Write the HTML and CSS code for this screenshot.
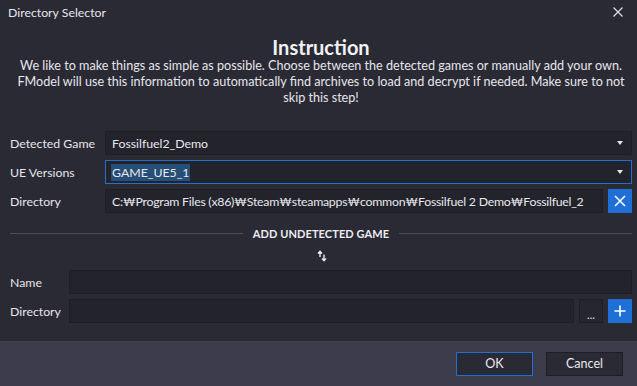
FILE: index.html
```html
<!DOCTYPE html>
<html>
<head>
<meta charset="utf-8">
<link rel="stylesheet" href="styles.css">
</head>
<body>
<div class="window">
  <div class="titlebar">
    <span class="title">Directory Selector</span>
    <svg class="close" width="10" height="10" viewBox="0 0 10 10"><path d="M0.5 0.5 L9.5 9.5 M9.5 0.5 L0.5 9.5" stroke="#e6e6e6" stroke-width="1.1" fill="none"/></svg>
  </div>
  <div class="content">
    <h1 class="heading">Instruction</h1>
    <p class="intro">We like to make things as simple as possible. Choose between the detected games or manually add your own. FModel will use this information to automatically find archives to load and decrypt if needed. Make sure to not skip this step!</p>

    <div class="form">
      <div class="row">
        <label class="label wide">Detected Game</label>
        <div class="field select"><span>Fossilfuel2_Demo</span><span class="arrow"></span></div>
      </div>
      <div class="row">
        <label class="label wide">UE Versions</label>
        <div class="field select focused"><span class="sel">GAME_UE5_1</span><span class="arrow"></span></div>
      </div>
      <div class="row">
        <label class="label wide">Directory</label>
        <div class="field grow"><span class="path">C:₩Program Files (x86)₩Steam₩steamapps₩common₩Fossilfuel 2 Demo₩Fossilfuel_2</span></div>
        <button class="btn-icon blue"><svg width="12" height="12" viewBox="0 0 12 12"><path d="M1 1 L11 11 M11 1 L1 11" stroke="#fff" stroke-width="1.6" fill="none"/></svg></button>
      </div>
    </div>

    <div class="divider"><span class="line"></span><span class="dtext">ADD UNDETECTED GAME</span><span class="line"></span></div>

    <div class="swap">
      <svg width="10" height="12" viewBox="0 0 10 12"><path d="M3 1.5 L3 7 M1 3.5 L3 1.2 L5 3.5" stroke="#e8e8e8" stroke-width="1.4" fill="none"/><path d="M7 4.5 L7 10.5 M5 8.5 L7 10.8 L9 8.5" stroke="#e8e8e8" stroke-width="1.4" fill="none"/></svg>
    </div>

    <div class="form">
      <div class="row">
        <label class="label narrow">Name</label>
        <div class="field grow"></div>
      </div>
      <div class="row">
        <label class="label narrow">Directory</label>
        <div class="field grow"></div>
        <button class="btn-icon dark"><span class="dots">...</span></button>
        <button class="btn-icon blue"><svg width="12" height="12" viewBox="0 0 12 12"><path d="M6 0.5 L6 11.5 M0.5 6 L11.5 6" stroke="#fff" stroke-width="1.6" fill="none"/></svg></button>
      </div>
    </div>
  </div>
  <div class="footer">
    <button class="btn ok">OK</button>
    <button class="btn">Cancel</button>
  </div>
</div>
</body>
</html>
```

FILE: styles.css
```css
* { box-sizing: border-box; }
html, body {
  margin: 0;
  padding: 0;
  background: #2a2a35;
}
body {
  width: 637px;
  height: 386px;
  overflow: hidden;
  font-family: Lato, "Noto Sans", "Noto Sans CJK KR", sans-serif;
  font-size: 12.3px;
  color: #e8e8ec;
}
.window {
  display: flex;
  flex-direction: column;
  height: 386px;
}
.titlebar {
  height: 26px;
  display: flex;
  align-items: center;
  justify-content: space-between;
  padding: 0 14px 2px 8px;
}
.title {
  font-size: 12.3px;
  color: #e6e6ea;
}
.content {
  flex: 1;
  padding: 0 5px 0 10px;
}
.heading {
  margin: 10px 0 0;
  font-size: 20px;
  font-weight: 700;
  line-height: 22px;
  text-align: center;
  color: #f2f2f4;
}
.intro {
  margin: 0;
  padding: 0 2px;
  text-align: center;
  line-height: 16px;
  font-size: 12.6px;
  color: #e6e6ea;
}
.form {
  display: flex;
  flex-direction: column;
  gap: 5px;
}
.content > .form:first-of-type { margin-top: 25px; }
.row {
  display: flex;
  align-items: center;
  gap: 5px;
  height: 24px;
}
.label {
  flex: none;
  white-space: nowrap;
  color: #e6e6ea;
}
.label.wide { width: 90px; }
.label.narrow { width: 54px; }
.field {
  flex: 1;
  height: 24px;
  background: #23232c;
  border: 1px solid #1e1e26;
  display: flex;
  align-items: center;
  padding: 0 6px;
  min-width: 0;
  white-space: nowrap;
  overflow: hidden;
}
.path { letter-spacing: -0.25px; }
.select { justify-content: space-between; padding-right: 8px; }
.focused { border-color: #2470d0; }
.sel {
  background: #264f78;
  padding: 0 1px;
  margin-left: -1px;
  line-height: 17px;
}
.arrow {
  width: 0;
  height: 0;
  border-left: 3.5px solid transparent;
  border-right: 3.5px solid transparent;
  border-top: 4px solid #e8e8e8;
}
.btn-icon {
  flex: none;
  width: 24px;
  height: 24px;
  border: 0;
  padding: 0;
  display: flex;
  align-items: center;
  justify-content: center;
}
.blue { background: #1e6fd6; }
.dark {
  background: #262630;
  border: 1px solid #1e1e26;
  color: #e8e8ec;
  align-items: flex-end;
}
.dots { font-size: 11px; line-height: 14px; font-family: Lato, sans-serif; }
.divider {
  margin-top: 12px;
  display: flex;
  align-items: center;
  gap: 10px;
  height: 16px;
}
.line {
  flex: 1;
  height: 1px;
  background: #4c4b5e;
}
.dtext {
  font-size: 11px;
  font-weight: 700;
  color: #ececf0;
  letter-spacing: 0.1px;
}
.swap {
  height: 29px;
  display: flex;
  justify-content: center;
  align-items: center;
  padding-left: 2px;
}
.footer {
  height: 45px;
  background: #3d3c4c;
  display: flex;
  justify-content: flex-end;
  align-items: center;
  gap: 13px;
  padding-right: 14px;
}
.btn {
  width: 77px;
  height: 24px;
  background: #2a2a35;
  border: 1px solid #1e1e26;
  color: #e8e8ec;
  font-family: Lato, sans-serif;
  font-size: 12.6px;
  padding: 0;
}
.btn.ok { border-color: #2470d0; }
```
